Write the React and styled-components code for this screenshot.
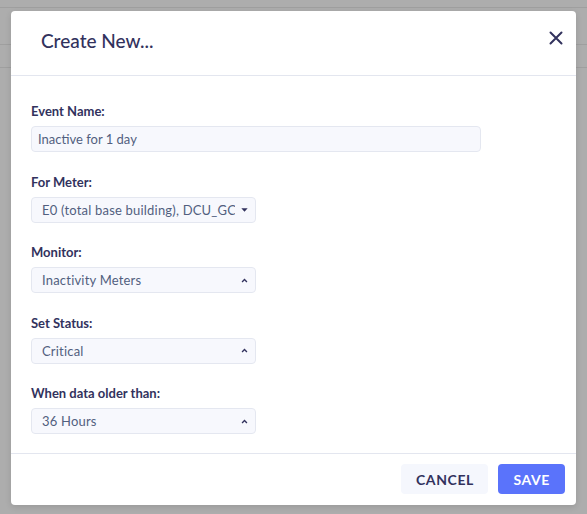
import React from 'react';
import styled, { createGlobalStyle } from 'styled-components';

const Global = createGlobalStyle`
  html, body { margin: 0; padding: 0; }
  body {
    background: #adadad;
    font-family: 'Lato', 'Open Sans', sans-serif;
    width: 587px;
    height: 514px;
    overflow: hidden;
  }
`;

const Backdrop = styled.div`
  position: relative;
  width: 587px;
  height: 514px;
  background: #adadad;
  display: flex;
  flex-direction: column;
`;

const Rule = styled.div`
  height: 1px;
  background: #9f9f9f;
  margin-top: ${({ gap }) => gap}px;
`;

const Modal = styled.div`
  position: absolute;
  top: 11px;
  left: 11px;
  width: 565px;
  height: 494px;
  background: #fff;
  border-radius: 4px;
  box-shadow: 0 2px 6px rgba(0, 0, 0, 0.12);
  display: flex;
  flex-direction: column;
  overflow: hidden;
`;

const Header = styled.div`
  height: 65px;
  display: flex;
  align-items: center;
  justify-content: space-between;
  padding: 0 13px 0 30px;
  border-bottom: 1px solid #e3e6ef;
  box-sizing: border-box;
`;

const Title = styled.h2`
  margin: -6px 0 0;
  font-size: 19px;
  font-weight: 500;
  color: #32325d;
`;

const Close = styled.button`
  border: 0;
  background: none;
  padding: 0;
  width: 14px;
  height: 14px;
  margin-top: -11px;
  display: flex;
  align-items: center;
  justify-content: center;
  cursor: pointer;
`;

const Body = styled.div`
  flex: 1;
  padding: 26px 20px 0;
  display: flex;
  flex-direction: column;
  gap: 20.5px;
`;

const Group = styled.div`
  display: flex;
  flex-direction: column;
`;

const Label = styled.label`
  font-size: 13px;
  line-height: 19px;
  font-weight: 700;
  color: #32325d;
  margin-bottom: 5px;
`;

const Input = styled.input`
  box-sizing: border-box;
  width: 450px;
  height: 26px;
  border: 1px solid #e4e7f0;
  border-radius: 4px;
  background: #f7f8fd;
  padding: 0 6px;
  font-family: inherit;
  font-size: 13px;
  color: #525f7f;
  outline: none;
`;

const Select = styled.div`
  box-sizing: border-box;
  width: 225px;
  height: 26px;
  border: 1px solid #e4e7f0;
  border-radius: 4px;
  background: #f7f8fd;
  padding: 0 6px 0 10px;
  display: flex;
  align-items: center;
  gap: 5px;
  font-size: 13px;
  color: #525f7f;
`;

const SelectText = styled.span`
  flex: 1;
  white-space: nowrap;
  overflow: hidden;
  letter-spacing: 0.2px;
`;

const Footer = styled.div`
  height: 52px;
  border-top: 1px solid #e3e6ef;
  box-sizing: border-box;
  display: flex;
  justify-content: flex-end;
  align-items: flex-start;
  gap: 10px;
  padding: 10px 11px 0;
`;

const Button = styled.button`
  height: 30px;
  border: 0;
  border-radius: 4px;
  padding: 0 ${({ primary }) => (primary ? 15 : 14.5)}px;
  font-family: inherit;
  font-size: 14px;
  font-weight: 700;
  letter-spacing: 0.6px;
  text-transform: uppercase;
  background: ${({ primary }) => (primary ? '#5a73fb' : '#f5f7fd')};
  color: ${({ primary }) => (primary ? '#fff' : '#32325d')};
  cursor: pointer;
`;

const CaretDown = () => (
  <svg width="9" height="9" viewBox="0 0 10 10">
    <path d="M1.5 3.5h7L5 7.5z" fill="#32325d" />
  </svg>
);

const ChevronUp = () => (
  <svg width="9" height="9" viewBox="0 0 10 10">
    <path d="M2.3 6.6L5 3.9l2.7 2.7" fill="none" stroke="#32325d" strokeWidth="1.5" />
  </svg>
);

const fields = [
  { label: 'Monitor:', value: 'Inactivity Meters' },
  { label: 'Set Status:', value: 'Critical' },
  { label: 'When data older than:', value: '36 Hours' },
];

export default function App() {
  return (
    <>
      <Global />
      <Backdrop>
        <Rule gap={7} />
        <Rule gap={36} />
        <Rule gap={22} />
        <Modal>
          <Header>
            <Title>Create New...</Title>
            <Close aria-label="Close">
              <svg width="14" height="14" viewBox="0 0 14 14">
                <path d="M1.5 1.5l11 11M12.5 1.5l-11 11" stroke="#32325d" strokeWidth="2" strokeLinecap="round" />
              </svg>
            </Close>
          </Header>
          <Body>
            <Group>
              <Label>Event Name:</Label>
              <Input defaultValue="Inactive for 1 day" />
            </Group>
            <Group>
              <Label>For Meter:</Label>
              <Select>
                <SelectText>E0 (total base building), DCU_GCS</SelectText>
                <CaretDown />
              </Select>
            </Group>
            {fields.map((f) => (
              <Group key={f.label}>
                <Label>{f.label}</Label>
                <Select>
                  <SelectText>{f.value}</SelectText>
                  <ChevronUp />
                </Select>
              </Group>
            ))}
          </Body>
          <Footer>
            <Button>Cancel</Button>
            <Button primary>Save</Button>
          </Footer>
        </Modal>
      </Backdrop>
    </>
  );
}
